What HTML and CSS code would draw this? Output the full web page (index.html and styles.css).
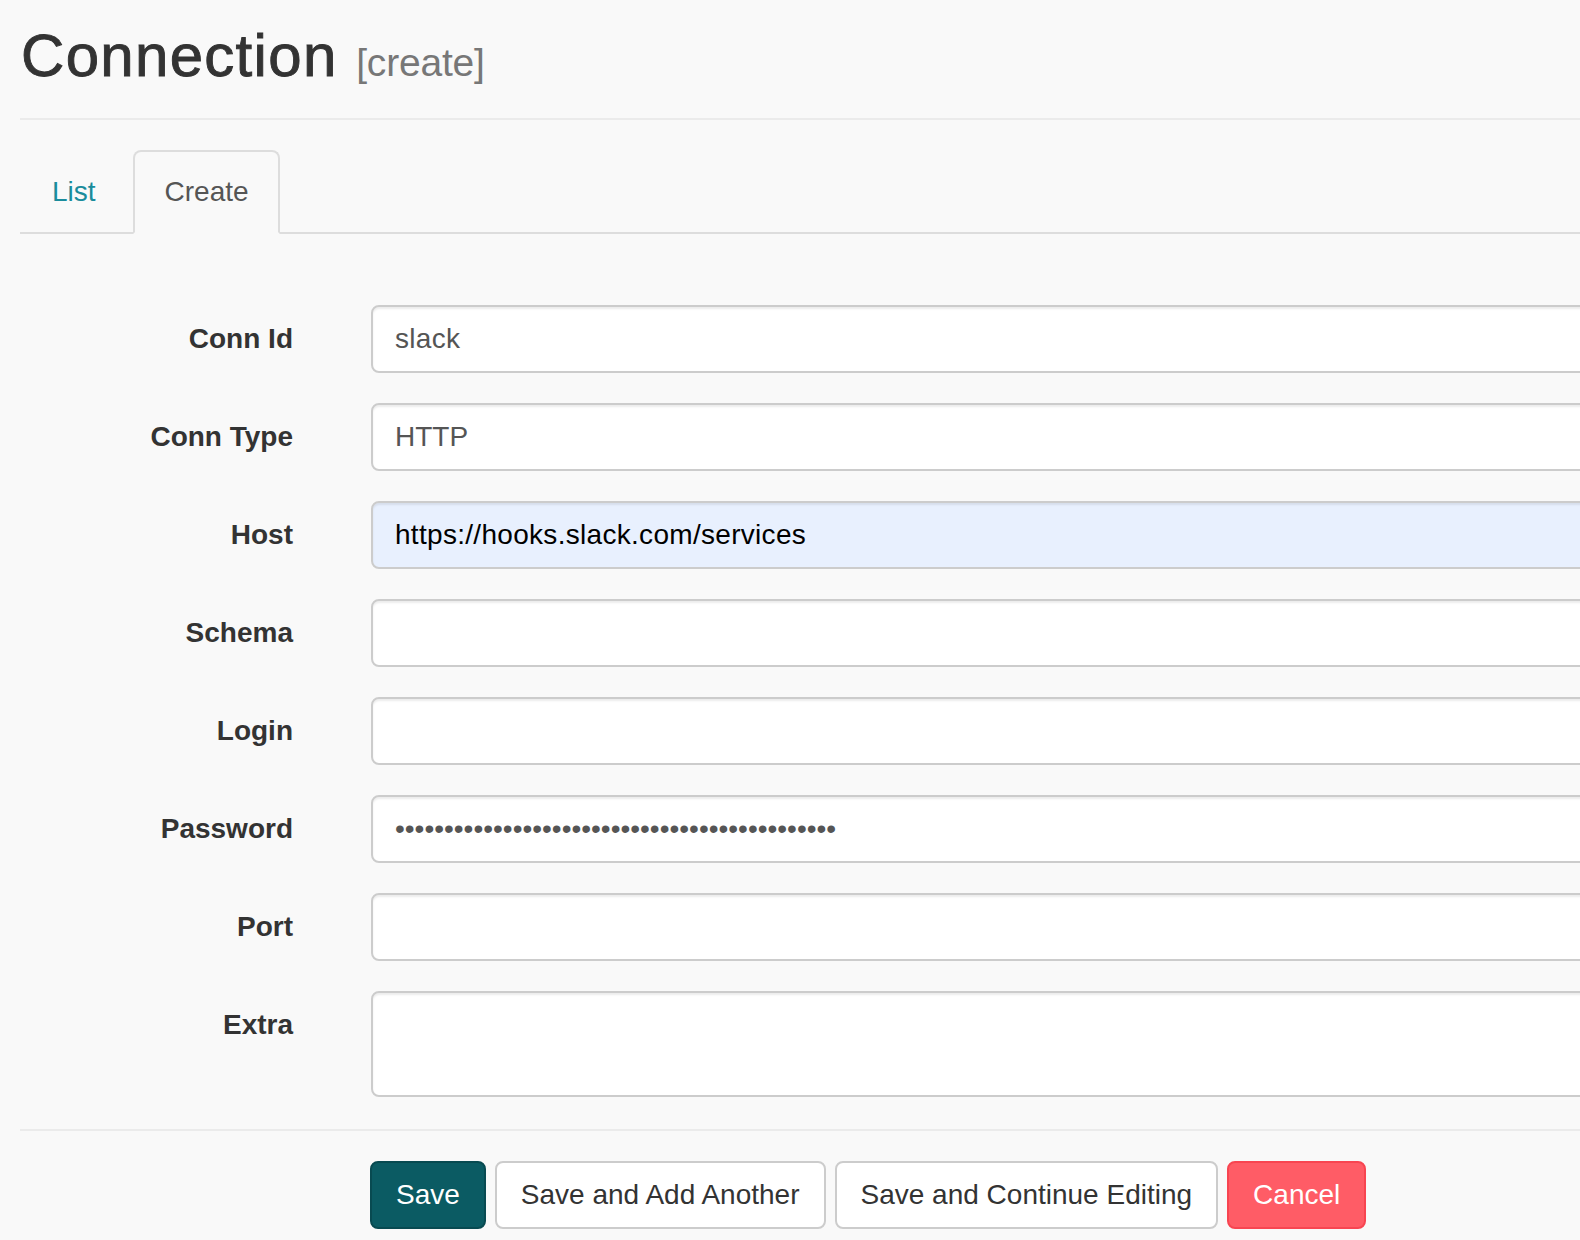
FILE: index.html
```html
<!DOCTYPE html>
<html>
<head>
<meta charset="utf-8">
<link rel="stylesheet" href="styles.css">
</head>
<body>
<div class="page">
  <div class="page-header">
    <h2 class="title"><span class="title-main">Connection</span> <small>[create]</small></h2>
  </div>
  <ul class="nav-tabs">
    <li class="tab"><a href="#">List</a></li>
    <li class="tab active"><a href="#">Create</a></li>
  </ul>
  <form class="form">
    <label class="label">Conn Id</label>
    <div class="control"><input class="input" type="text" value="slack"></div>
    <label class="label">Conn Type</label>
    <div class="control"><div class="input select">HTTP</div></div>
    <label class="label">Host</label>
    <div class="control"><input class="input autofill" type="text" value="https://hooks.slack.com/services"></div>
    <label class="label">Schema</label>
    <div class="control"><input class="input" type="text" value=""></div>
    <label class="label">Login</label>
    <div class="control"><input class="input" type="text" value=""></div>
    <label class="label">Password</label>
    <div class="control"><input class="input password" type="password" value="xxxxxxxxxxxxxxxxxxxxxxxxxxxxxxxxxxxxxxxxxxxxx"></div>
    <label class="label">Port</label>
    <div class="control"><input class="input" type="text" value=""></div>
    <label class="label">Extra</label>
    <div class="control"><textarea class="input textarea"></textarea></div>
  </form>
  <div class="actions">
    <div class="buttons">
      <button class="btn btn-primary" type="button">Save</button>
      <button class="btn" type="button">Save and Add Another</button>
      <button class="btn" type="button">Save and Continue Editing</button>
      <button class="btn btn-danger" type="button">Cancel</button>
    </div>
  </div>
</div>
</body>
</html>
```
FILE: styles.css
```css
html, body {
  margin: 0;
  padding: 0;
  background: #f9f9f9;
  overflow: hidden;
}
body {
  font-family: "Liberation Sans", Arial, sans-serif;
  font-size: 28px;
  color: #333;
}
.page {
  padding-left: 20px;
  overflow: hidden;
  width: 1560px;
}
.page-header {
  padding-top: 23px;
  padding-bottom: 22px;
  border-bottom: 2px solid #ebebeb;
}
.title {
  margin: 0;
  font-size: 60px;
  line-height: 66px;
  font-weight: normal;
  color: #333;
  padding-left: 1px;
}
.title-main {
  letter-spacing: 1.3px;
  -webkit-text-stroke: 0.9px #333;
}
.title small {
  font-size: 39px;
  color: #777;
  font-weight: normal;
  letter-spacing: -0.2px;
  margin-left: 2px;
}
.nav-tabs {
  list-style: none;
  margin: 30px 0 0 0;
  padding: 0;
  display: flex;
  border-bottom: 2px solid #ddd;
}
.tab {
  margin-bottom: -2px;
  margin-right: 4px;
}
.tab a {
  display: block;
  padding: 20px 30px;
  line-height: 40px;
  border: 2px solid transparent;
  border-radius: 8px 8px 0 0;
  color: #1a8c9c;
  text-decoration: none;
  font-size: 28px;
}
.tab:first-child a {
  padding-right: 31px;
}
.tab.active a {
  color: #555;
  background: #f9f9f9;
  border-color: #ddd;
  border-bottom-color: #f9f9f9;
  padding-right: 29px;
}
.form {
  display: grid;
  grid-template-columns: 273px 1260px;
  column-gap: 78px;
  row-gap: 30px;
  margin-top: 71px;
}
.label {
  text-align: right;
  font-weight: bold;
  padding-top: 14px;
  line-height: 40px;
  color: #333;
}
.control {
  display: flex;
}
.input {
  box-sizing: border-box;
  width: 100%;
  height: 68px;
  padding: 12px 22px;
  font-family: "Liberation Sans", Arial, sans-serif;
  font-size: 28px;
  line-height: 40px;
  color: #555;
  background: #fff;
  border: 2px solid #ccc;
  border-radius: 8px;
  box-shadow: inset 0 2px 2px rgba(0, 0, 0, 0.075);
  outline: none;
  margin: 0;
  letter-spacing: 0.3px;
}
.password {
  letter-spacing: 0;
}
.select {
  line-height: 40px;
  letter-spacing: 0;
}
.autofill {
  background: #e8f0fe;
  color: #000;
}
.textarea {
  height: 106px;
  resize: none;
  display: block;
}
.actions {
  margin-top: 32px;
  border-top: 2px solid #ebebeb;
  padding-top: 30px;
  padding-left: 350px;
}
.buttons {
  display: flex;
  gap: 9px;
}
.btn {
  font-family: "Liberation Sans", Arial, sans-serif;
  font-size: 28px;
  line-height: 40px;
  padding: 12px 24px;
  border: 2px solid #ccc;
  border-radius: 8px;
  background: #fff;
  color: #333;
  margin: 0;
}
.btn-primary {
  background: #0b5b63;
  border-color: #084a51;
  color: #fff;
}
.btn-danger {
  background: #ff5c66;
  border-color: #f84551;
  color: #fff;
}
```
